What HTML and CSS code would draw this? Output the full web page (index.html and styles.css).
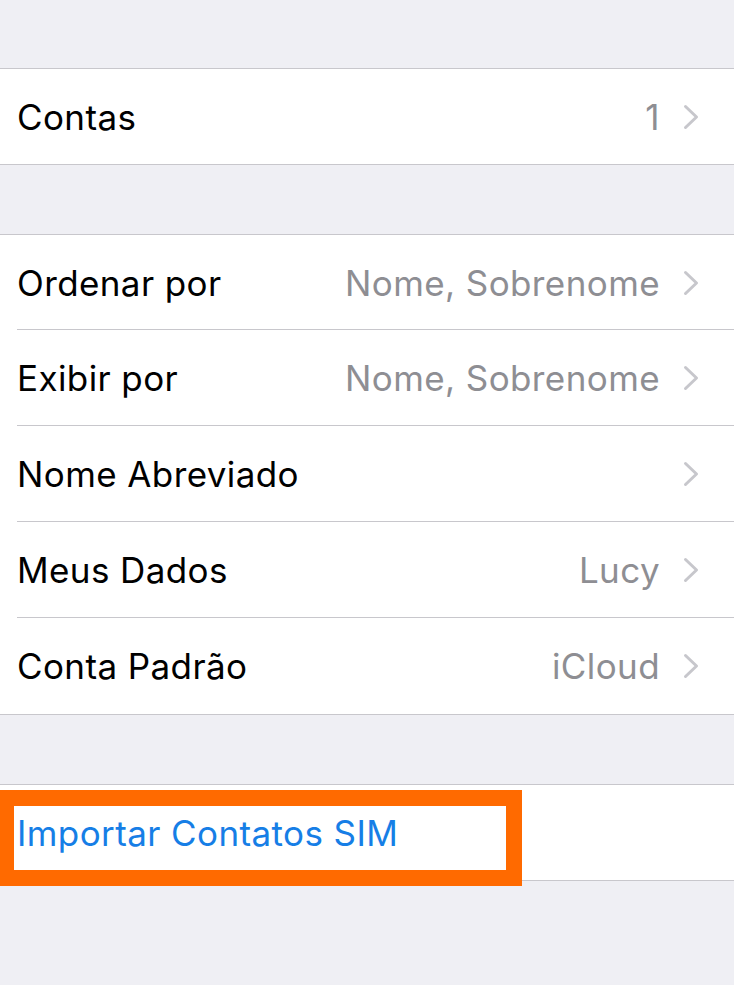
FILE: index.html
```html
<!DOCTYPE html>
<html lang="pt-BR">
<head>
  <meta charset="UTF-8" />
  <meta name="viewport" content="width=device-width, initial-scale=1" />
  <title>Contatos</title>
  <link rel="stylesheet" href="styles.css">
</head>
<body>

<div class="settings">
  <div class="group">
    <div class="row">
      <div class="label">Contas</div>
      <div class="value">1</div>
      <svg class="chevron" viewBox="0 0 16 26"><polyline points="2.5,2.5 13.5,13 2.5,23.5" /></svg>
    </div>
  </div>

  <div class="group">
    <div class="row">
      <div class="label">Ordenar por</div>
      <div class="value">Nome, Sobrenome</div>
      <svg class="chevron" viewBox="0 0 16 26"><polyline points="2.5,2.5 13.5,13 2.5,23.5" /></svg>
    </div>
    <div class="row">
      <div class="label">Exibir por</div>
      <div class="value">Nome, Sobrenome</div>
      <svg class="chevron" viewBox="0 0 16 26"><polyline points="2.5,2.5 13.5,13 2.5,23.5" /></svg>
    </div>
    <div class="row">
      <div class="label">Nome Abreviado</div>
      <div class="value"></div>
      <svg class="chevron" viewBox="0 0 16 26"><polyline points="2.5,2.5 13.5,13 2.5,23.5" /></svg>
    </div>
    <div class="row">
      <div class="label">Meus Dados</div>
      <div class="value">Lucy</div>
      <svg class="chevron" viewBox="0 0 16 26"><polyline points="2.5,2.5 13.5,13 2.5,23.5" /></svg>
    </div>
    <div class="row">
      <div class="label">Conta Padrão</div>
      <div class="value">iCloud</div>
      <svg class="chevron" viewBox="0 0 16 26"><polyline points="2.5,2.5 13.5,13 2.5,23.5" /></svg>
    </div>
  </div>

  <div class="group">
    <div class="row action">
      <div class="label link">Importar Contatos SIM</div>
      <div class="highlight"></div>
    </div>
  </div>
</div>

</body>
</html>
```

FILE: styles.css
```css
* {
  margin: 0; padding: 0; box-sizing: border-box;
}
body {
  background-color: #efeff4;
  font-family: 'Inter', 'Liberation Sans', sans-serif;
  color: #000;
}
.settings {
  padding-top: 68px;
}
.group {
  background: white;
  border-top: 1px solid #c8c7cc;
  border-bottom: 1px solid #c8c7cc;
  margin-bottom: 69px;
}
.row {
  position: relative;
  display: flex;
  align-items: center;
  height: 96px;
  padding: 0 35px 0 17px;
}
.row + .row::before {
  content: '';
  position: absolute;
  top: -1px;
  left: 17px;
  right: 0;
  border-top: 1px solid #c8c7cc;
}
.group .row:first-child {
  height: 95px;
}
.label {
  flex: 1;
  font-size: 35px;
  letter-spacing: 0.4px;
}
.value {
  font-size: 35px;
  letter-spacing: 0.4px;
  color: #8e8e93;
  margin-right: 23px;
}
.chevron {
  width: 16px;
  height: 26px;
  fill: none;
  stroke: #c7c7cc;
  stroke-width: 3;
  stroke-linecap: round;
  stroke-linejoin: round;
}
.link {
  color: #167ee6;
}
.highlight {
  position: absolute;
  left: 0;
  top: 5px;
  width: 522px;
  height: 96px;
  border: 16px solid #ff6a00;
  border-left-width: 14px;
}
```
